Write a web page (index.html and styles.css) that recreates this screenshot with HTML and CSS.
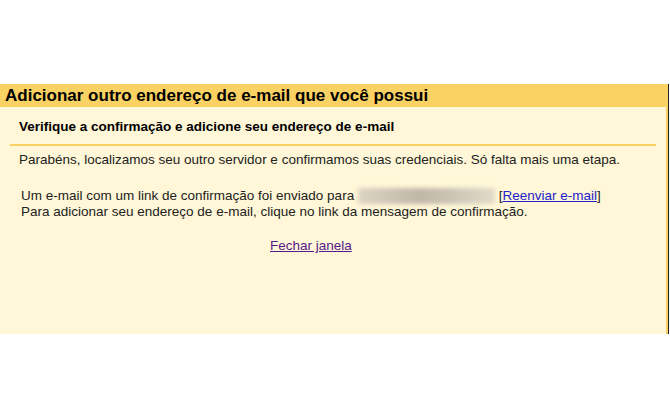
FILE: index.html
```html
<!DOCTYPE html>
<html lang="pt-BR">
<head>
    <meta charset="UTF-8">
    <title>Adicionar outro endereço de e-mail</title>
    <link rel="stylesheet" href="styles.css">
</head>
<body>
    <div class="dialog">
        <div class="dialog-title">Adicionar outro endereço de e-mail que você possui</div>
        <div class="dialog-body">
            <h3 class="step-title">Verifique a confirmação e adicione seu endereço de e-mail</h3>
            <p class="intro">Parabéns, localizamos seu outro servidor e confirmamos suas credenciais. Só falta mais uma etapa.</p>
            <div class="message">
                <div>Um e-mail com um link de confirmação foi enviado para <span class="blurred"></span> [<a href="#" class="link">Reenviar e-mail</a>]</div>
                <div>Para adicionar seu endereço de e-mail, clique no link da mensagem de confirmação.</div>
            </div>
            <div class="close-row">
                <a href="#" class="link visited">Fechar janela</a>
            </div>
        </div>
    </div>
</body>
</html>
```

FILE: styles.css
```css
body {
    margin: 0;
    padding-top: 84px;
    background: #ffffff;
    font-family: "Liberation Sans", Arial, sans-serif;
    color: #222;
}
.dialog {
    width: 668px;
    border-right: 1px solid #222;
}
.dialog-title {
    background-color: #fad163;
    height: 23px;
    line-height: 24px;
    padding-left: 5px;
    font-size: 17px;
    font-weight: bold;
    color: #000;
}
.dialog-body {
    background-color: #fff7d7;
    border-right: 2px solid #fad163;
    height: 227px;
    padding: 0 10px 0 10px;
    font-size: 13.5px;
}
.step-title {
    margin: 0;
    padding: 12px 9px 9px;
    font-size: 13.5px;
    line-height: 16px;
    border-bottom: 2px solid #fad163;
    color: #000;
}
.intro {
    margin: 0;
    padding: 6px 9px 0;
    line-height: 16px;
}
.message {
    padding: 20px 11px 0;
    line-height: 16px;
}
.blurred {
    display: inline-block;
    width: 137px;
    height: 16px;
    vertical-align: -4px;
    background: linear-gradient(90deg, #ddd5c4, #bfb7a7 45%, #cdc6b7 70%, #e2dbc9);
    filter: blur(2px);
}
.link {
    color: #2222cc;
}
.visited {
    color: #551a8b;
}
.close-row {
    padding-top: 18px;
    padding-left: 260px;
    line-height: 16px;
}
```
